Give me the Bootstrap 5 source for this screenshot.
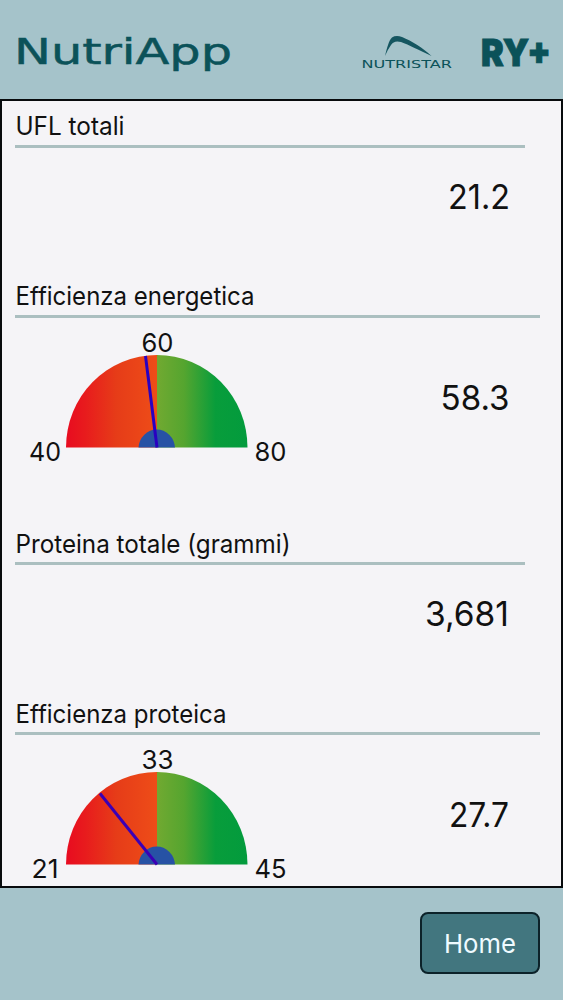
<!DOCTYPE html>
<html lang="it">
<head>
<meta charset="utf-8">
<meta name="viewport" content="width=device-width, initial-scale=1">
<title>NutriApp</title>
<link href="https://cdn.jsdelivr.net/npm/bootstrap@5.3.0/dist/css/bootstrap.min.css" rel="stylesheet">
<style>
body{background:#a5c3ca;font-family:Inter,"Liberation Sans",sans-serif;color:#111;height:1000px;overflow:hidden}
.topbar{height:99px}
.panel{height:789px;background:#f5f4f7;border:2px solid #080b0d}
.metric{height:170px;padding-left:13px}
.metric.tall{height:247.5px}
.metric-title{height:46.5px;width:510px;margin:0;border-bottom:3px solid #abbfc0}
.tall .metric-title{width:525px}
.metric-body{width:525px}
svg{display:block}
text{fill:#111}
.gauge text{font-size:26px}
.brand text{fill:#0b5259}
.value text{font-size:34px}
.home-btn{width:120px;height:62px;margin:23.5px 23px 0 0;background:#42767f;border:2px solid #0c2229;border-radius:8px;padding:0}
.home-btn:hover{background:#376974}
.home-btn text{fill:#effbff;font-size:26px}
</style>
</head>
<body class="d-flex flex-column">
<svg width="0" height="0" style="position:absolute" aria-hidden="true">
<defs>
<linearGradient id="low" gradientUnits="userSpaceOnUse" x1="51" x2="142" y1="0" y2="0"><stop offset="0" stop-color="#e80b20"/><stop offset=".22" stop-color="#e81c1d"/><stop offset=".55" stop-color="#e63c18"/><stop offset="1" stop-color="#ee4d18"/></linearGradient>
<linearGradient id="high" gradientUnits="userSpaceOnUse" x1="142" x2="232" y1="0" y2="0"><stop offset="0" stop-color="#71a931"/><stop offset=".3" stop-color="#55a52f"/><stop offset=".65" stop-color="#089d3b"/><stop offset="1" stop-color="#039b3d"/></linearGradient>
<g id="dial"><path d="M51 129.500A91 92.500 0 0 1 142 37V129.500Z" fill="url(#low)"/><path d="M142 37A90.500 92.500 0 0 1 232.500 129.500H142Z" fill="url(#high)"/><path d="M123.500 129.500A18.300 19.500 0 0 1 160 129.500Z" fill="#2752a5"/></g>
</defs>
</svg>
<header class="topbar flex-shrink-0">
<svg class="brand" width="563" height="99" role="img" aria-label="NutriApp Nutristar RY+">
<text x="14" y="63.500" font-family="DejaVu Sans" font-size="35.500" textLength="218" lengthAdjust="spacingAndGlyphs" stroke="#0b5259" stroke-width=".5">NutriApp</text>
<path d="M385 56C387 48 389 40 392 37.500Q396 35 402 37C412 41 423 48 431.500 56C419 50 409 45 401 42Q394 40 391 45Q388 49 385 56Z" fill="#155660"/>
<text x="361.500" y="68" font-family="DejaVu Sans" font-size="10.500" textLength="90.500" lengthAdjust="spacingAndGlyphs">NUTRISTAR</text>
<text x="481" y="66" font-family="Inter" font-weight="900" font-size="37.500" textLength="70" lengthAdjust="spacingAndGlyphs" stroke="#0b5259" stroke-width=".9">RY+</text>
</svg>
</header>
<main class="panel flex-shrink-0 overflow-hidden">
<section class="metric">
<h2 class="metric-title"><svg width="500" height="43"><text x=".5" y="34" font-weight="400" font-size="25.500" textLength="109" lengthAdjust="spacingAndGlyphs">UFL totali</text></svg></h2>
<div class="metric-body d-flex justify-content-end"><svg class="value" width="120" height="100"><text x="28" y="60.500" textLength="62" lengthAdjust="spacingAndGlyphs">21.2</text></svg></div>
</section>
<section class="metric tall">
<h2 class="metric-title"><svg width="500" height="43"><text x=".5" y="34" font-weight="400" font-size="25.500" textLength="239" lengthAdjust="spacingAndGlyphs">Efficienza energetica</text></svg></h2>
<div class="metric-body d-flex">
<svg class="gauge" width="300" height="165"><use href="#dial"/><path d="M130.500 38L142 129.500" stroke="#2900c2" stroke-width="3"/><text x="126.500" y="33.500" textLength="32" lengthAdjust="spacingAndGlyphs">60</text><text x="14" y="142.500" textLength="32" lengthAdjust="spacingAndGlyphs">40</text><text x="239.500" y="142.500" textLength="32" lengthAdjust="spacingAndGlyphs">80</text></svg>
<svg class="value ms-auto" width="120" height="165"><text x="20.500" y="91.500" textLength="69" lengthAdjust="spacingAndGlyphs">58.3</text></svg>
</div>
</section>
<section class="metric">
<h2 class="metric-title"><svg width="500" height="43"><text x=".5" y="34" font-weight="400" font-size="25.500" textLength="275" lengthAdjust="spacingAndGlyphs">Proteina totale (grammi)</text></svg></h2>
<div class="metric-body d-flex justify-content-end"><svg class="value" width="120" height="100"><text x="5" y="61" textLength="84" lengthAdjust="spacingAndGlyphs">3,681</text></svg></div>
</section>
<section class="metric tall">
<h2 class="metric-title"><svg width="500" height="43"><text x=".5" y="34" font-weight="400" font-size="25.500" textLength="211" lengthAdjust="spacingAndGlyphs">Efficienza proteica</text></svg></h2>
<div class="metric-body d-flex">
<svg class="gauge" width="300" height="150"><use href="#dial"/><path d="M85 58.500L142 129.500" stroke="#3b00b5" stroke-width="3"/><text x="126.500" y="34" textLength="32" lengthAdjust="spacingAndGlyphs">33</text><text x="16.500" y="142.500" textLength="27" lengthAdjust="spacingAndGlyphs">21</text><text x="239.500" y="142.500" textLength="32" lengthAdjust="spacingAndGlyphs">45</text></svg>
<svg class="value ms-auto" width="120" height="150"><text x="29" y="92" textLength="60" lengthAdjust="spacingAndGlyphs">27.7</text></svg>
</div>
</section>
</main>
<footer class="d-flex justify-content-end">
<button type="button" class="btn home-btn"><svg width="116" height="58"><text x="22" y="38.500" textLength="72" lengthAdjust="spacingAndGlyphs">Home</text></svg></button>
</footer>
<script src="https://cdn.jsdelivr.net/npm/bootstrap@5.3.0/dist/js/bootstrap.bundle.min.js"></script>
</body>
</html>
